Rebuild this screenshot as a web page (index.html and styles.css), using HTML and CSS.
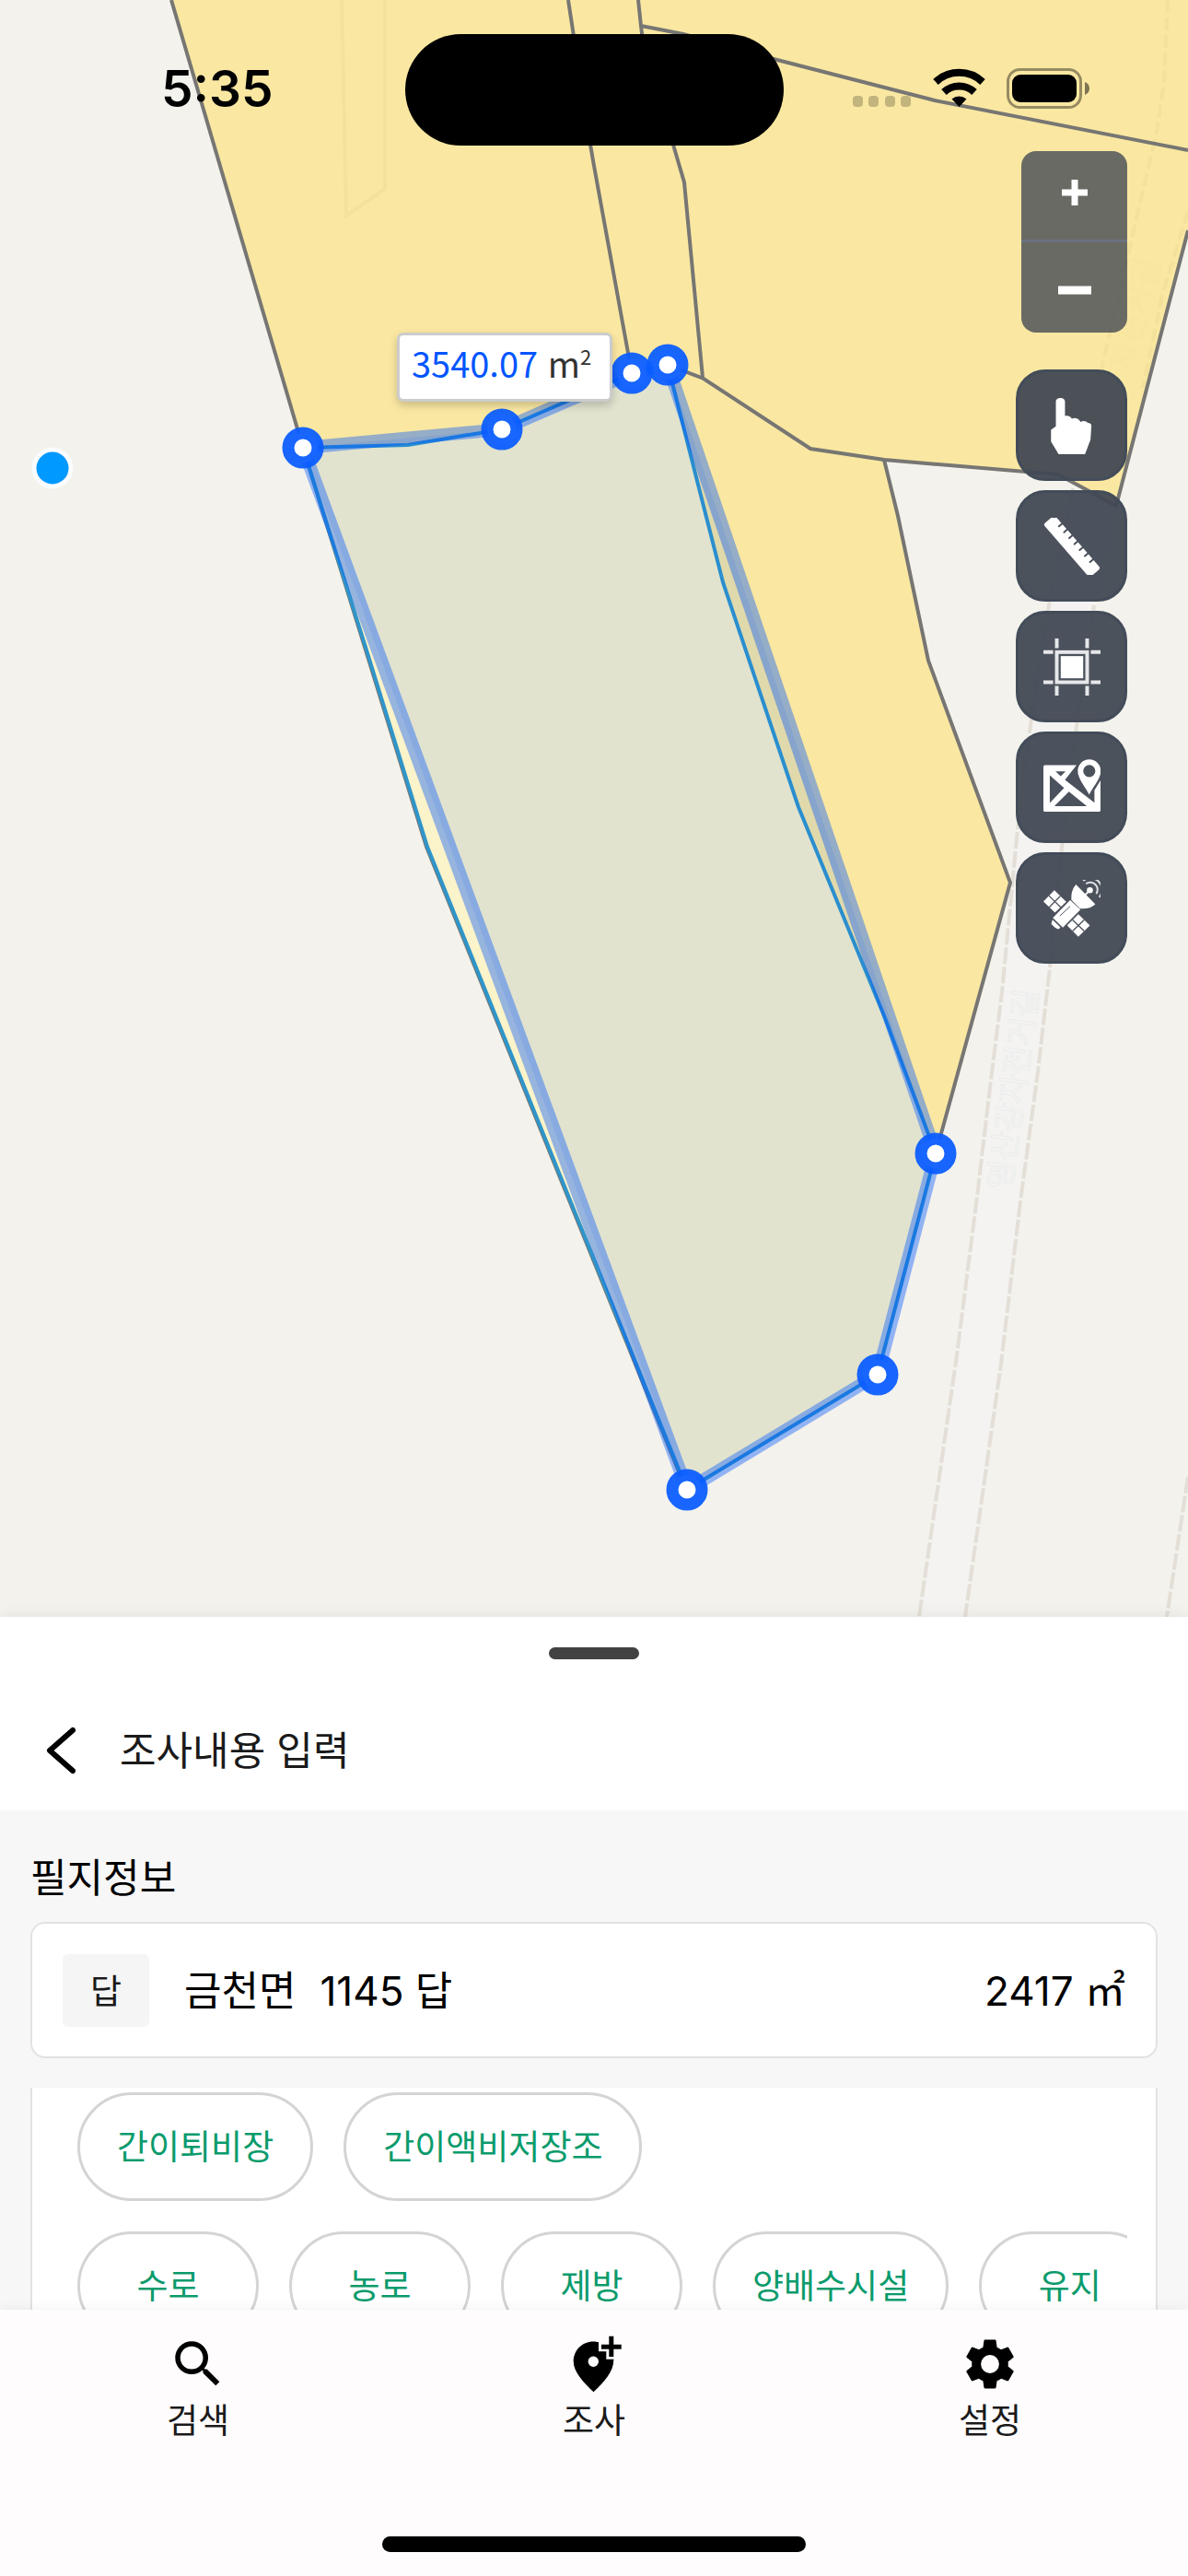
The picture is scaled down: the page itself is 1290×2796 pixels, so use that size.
FILE: index.html
```html
<!DOCTYPE html>
<html lang="ko">
<head>
<meta charset="utf-8">
<meta name="viewport" content="width=device-width, initial-scale=1">
<title>조사내용 입력</title>
<link rel="stylesheet" href="styles.css">
</head>
<body>
<div class="app">
  <main class="map">
    <svg class="map-canvas" viewBox="0 0 1290 1755" preserveAspectRatio="xMidYMin slice" aria-hidden="true">
      <rect width="1290" height="1755" fill="#f3f2ec"/>
      <!-- roads -->
      <path d="M1268 0L1256 143L1231 250L1215 321L1196 390L1165 530L1139 657L1119 787L1105 900L1088 1077L1076 1172L1061 1299L1039 1471L998 1755H1048L1087 1480L1108 1304L1127 1163L1140 1050L1153 920L1169 788L1188 657L1237 430L1262 321L1290 215V0Z" fill="#f4f3f1"/>
      <g class="road-edge">
        <path d="M1165 530L1139 657L1119 787L1105 900L1088 1077L1076 1172L1061 1299L1039 1471L998 1755"/>
        <path d="M1188 657L1169 788L1153 920L1140 1050L1127 1163L1108 1304L1087 1480L1048 1755"/>
        <path d="M1290 1603L1267 1755"/>
      </g>
      <text class="road-name" transform="translate(1097 1292) rotate(-82)">영산강자전거길</text>
      <!-- neighbouring parcels -->
      <path fill="#fae8a2" d="M186 0L329 486L443 483L545 466L686 405L725 396L785 632L867 876L961 1105L1016 1252L1097 958L1008 717L960 499L1114 512L1149 515L1212 549L1290 250V0Z"/>
      <g class="parcel-faint">
        <path d="M371 0L376 234L418 205V0"/>
        <path stroke-dasharray="14 5" d="M1268 0L1264 89L1256 143L1246 186L1231 250L1215 321L1196 400M1290 229L1262 321L1241 421"/>
      </g>
      <text class="road-name road-name-faint" transform="translate(1228 405) rotate(-75)">자전거길</text>
      <g class="parcel-line">
        <path d="M186 0L329 486"/>
        <path d="M617 0L641 157L645 180L686 405"/>
        <path d="M693 0L696 28L700 60L731 157L743 198L763 410"/>
        <path d="M696 28L742 37L840 64L1015 109L1290 163"/>
        <path d="M725 396L764 411L880 487L960 499L1114 512L1149 515L1212 549L1290 250"/>
        <path d="M960 499L975 560L1008 717L1097 958L1016 1252"/>
        <path d="M329 486L399 712L463 919L745 1617"/>
      </g>
      <!-- selected parcel and the surveyed outline over it -->
      <path fill="#fbf3c9" stroke="#2f95ca" stroke-width="4" d="M329 486L443 483L545 466L686 405L725 396L785 632L867 876L961 1105L1016 1252L953 1492L746 1617L464 919L400 712Z"/>
      <path class="survey" d="M329 486L545 466L686 405L725 396L1016 1252L953 1492L746 1617Z"/>
      <g class="vertex">
        <circle cx="329" cy="486" r="16"/><circle cx="545" cy="466" r="16"/><circle cx="686" cy="405" r="16"/><circle cx="725" cy="396" r="16"/><circle cx="1016" cy="1252" r="16"/><circle cx="953" cy="1492" r="16"/><circle cx="746" cy="1617" r="16"/>
      </g>
      <circle cx="57" cy="508" r="20" fill="#0099ff" stroke="#fafcfd" stroke-width="5"/>
    </svg>

    <header class="status">
      <time class="clock">5:35</time>
      <span class="island"></span>
      <svg class="status-icons" viewBox="0 0 260 44" aria-hidden="true">
        <g opacity=".22"><rect x="1" y="30" width="11" height="12" rx="4"/><rect x="18" y="30" width="11" height="12" rx="4"/><rect x="36" y="30" width="11" height="12" rx="4"/><rect x="53" y="30" width="11" height="12" rx="4"/></g>
        <g fill="none" stroke="#000" stroke-width="8"><path d="M91 15A37 37 0 0 1 142 15"/><path d="M100 26A24 24 0 0 1 133 26"/></g>
        <path d="M108.500 33.500A12 12 0 0 1 124.500 33.500L116.500 42Z"/>
        <rect x="169.500" y="1.500" width="79" height="41" rx="13" fill="none" stroke="#000" stroke-opacity=".4" stroke-width="3"/>
        <rect x="174" y="7" width="70" height="30" rx="9"/>
        <path d="M253 15q5 2 5 7t-5 7Z" opacity=".5"/>
      </svg>
    </header>

    <div class="controls">
      <div class="zoom">
        <button type="button" aria-label="확대"><svg viewBox="0 0 36 36"><path d="M18 4V32M4 18H32" stroke="#fff" stroke-width="7"/></svg></button>
        <button type="button" aria-label="축소"><svg viewBox="0 0 36 36"><path d="M0 18H36" stroke="#fff" stroke-width="9"/></svg></button>
      </div>
      <button class="tool" type="button" aria-label="선택"><svg viewBox="0 0 188 188"><path fill="#fff" d="M41 15C41-1 71-1 71 15V62C82 60 88 64 94 71C104 67 116 70 122 82C132 77 140 79 146 85C155 85 158 90 158 95L155 140L137 188H50L25 146V108L41 96Z"/></svg></button>
      <button class="tool" type="button" aria-label="거리 측정"><svg viewBox="0 0 188 188"><g transform="translate(94 94) rotate(49)"><path fill="#fff" d="M-108-24H-81V-10Q-78-5-75-10V-24H-55V-10Q-52-5-49-10V-24H-29V-10Q-26-5-23-10V-24H-3V-10Q0-5 3-10V-24H23V-10Q26-5 29-10V-24H49V-10Q52-5 55-10V-24H75V-10Q78-5 81-10V-24H108Q116-24 116-16V16Q116 24 108 24H-108Q-116 24-116 16V-16Q-116-24-108-24Z"/></g></svg></button>
      <button class="tool" type="button" aria-label="면적 측정"><svg viewBox="0 0 188 188"><rect x="44" y="45" width="100" height="99" fill="none" stroke="#e6e7ea" stroke-width="12"/><rect x="57" y="58" width="74" height="73" fill="#fff"/><path stroke="#e6e7ea" stroke-width="12" d="M0 45H32M156 45H188M0 144H32M156 144H188M44 0V32M144 0V32M44 156V188M144 156V188"/></svg></button>
      <button class="tool" type="button" aria-label="지도 유형"><svg viewBox="0 0 188 188"><g fill="#fff" fill-rule="evenodd"><path d="M5 20H109L71 68L168 143V102L188 70V168Q188 173 183 173H5Q0 173 0 168V25Q0 20 5 20ZM21 53V144L68 95ZM40 40H73L57 56ZM36 155H143L84 107Z"/><path d="M151 117C140 95 113 65 113 39A38 38 0 1 1 189 39C189 65 160 95 151 117ZM151 19A20 20 0 1 0 151 59A20 20 0 1 0 151 19Z"/></g></svg></button>
      <button class="tool" type="button" aria-label="위성 지도"><svg viewBox="0 0 188 188"><g fill="#fff"><path d="M36 34L75 72L38 108L0 71Z"/><path d="M115 113L153 150L115 187L78 150Z"/><path d="M88 67L122 98L64 157L31 125Z"/><path d="M30 131L56 156L50 162Q40 162 26 145Z"/><path d="M107 15L171 80Q150 98 120 94L92 66Q90 35 107 15Z"/><circle cx="153" cy="34" r="10"/></g><g stroke="#4a505b" stroke-width="4"><path d="M18 52L57 90M56 53L19 90M96 132L134 168M134 132L96 168"/><path d="M54 119L88 87" stroke-width="3"/></g><path d="M153 34L138 49" stroke="#fff" stroke-width="6"/><g fill="none" stroke="#dfe1e4" stroke-width="6"><path d="M140 13A24 24 0 0 1 174 46"/><path d="M131 3A38 38 0 0 1 184 57"/></g></svg></button>
    </div>

    <output class="area-label"><b>3540.07</b> m<sup>2</sup></output>
  </main>

  <section class="sheet">
    <div class="sheet-head">
      <span class="handle"></span>
      <div class="title-row">
        <button class="back" type="button" aria-label="뒤로"><svg viewBox="0 0 36 54"><path d="M31 5L6 27L31 49" fill="none" stroke="#000" stroke-width="6" stroke-linecap="round" stroke-linejoin="round"/></svg></button>
        <h1>조사내용 입력</h1>
      </div>
    </div>
    <div class="sheet-body">
      <h2>필지정보</h2>
      <div class="parcel">
        <span class="badge">답</span>
        <span class="address"><span>금천면</span><span>1145 답</span></span>
        <span class="size">2417 ㎡</span>
      </div>
      <div class="form">
        <div class="chips">
          <div class="chip-row">
            <button type="button">간이퇴비장</button>
            <button type="button">간이액비저장조</button>
          </div>
          <div class="chip-row">
            <button type="button">수로</button>
            <button type="button">농로</button>
            <button type="button">제방</button>
            <button type="button">양배수시설</button>
            <button type="button">유지</button>
          </div>
        </div>
      </div>
    </div>
  </section>

  <footer class="dock">
    <nav>
      <a href="#search"><svg viewBox="0 0 24 24"><path d="M15.500 14h-.79l-.28-.27A6.471 6.471 0 0 0 16 9.500 6.500 6.500 0 1 0 9.500 16c1.610 0 3.090-.59 4.230-1.570l.27.28v.79l5 4.990L20.490 19l-4.990-5zm-6 0C7.010 14 5 11.990 5 9.500S7.010 5 9.500 5 14 7.010 14 9.500 11.990 14 9.500 14z"/></svg>검색</a>
      <a href="#survey"><svg viewBox="0 0 66 66"><path fill-rule="evenodd" d="M38 9.200C36 8.600 34.500 8.400 32.500 8.400C20 8.400 10.700 18 10.700 30C10.700 42 22 53 32.500 63.300C43 53 54.400 42 54.400 27.700H46.300V19.300H38ZM32.300 24.600a5.700 5.700 0 1 0 0 11.400a5.700 5.700 0 1 0 0-11.400Z"/><path d="M49.300 2.700h5v9h8.400v5h-8.400v8.300h-5v-8.300H41v-5h8.300Z"/></svg>조사</a>
      <a href="#settings"><svg viewBox="0 0 24 24"><path d="M19.140 12.940c.04-.3.060-.61.060-.94 0-.32-.02-.64-.07-.94l2.030-1.580a.49.49 0 0 0 .12-.61l-1.920-3.320a.488.488 0 0 0-.59-.22l-2.390.96c-.5-.38-1.030-.7-1.620-.94l-.36-2.540a.484.484 0 0 0-.48-.41h-3.840c-.24 0-.43.17-.47.41l-.36 2.540c-.59.24-1.130.57-1.620.94l-2.390-.96c-.22-.08-.47 0-.59.22L2.740 8.870c-.12.21-.08.47.12.61l2.030 1.580c-.05.3-.09.63-.09.94s.02.64.07.94l-2.030 1.580a.49.49 0 0 0-.12.61l1.920 3.320c.12.22.37.29.59.22l2.390-.96c.5.38 1.030.7 1.620.94l.36 2.540c.05.24.24.41.48.41h3.840c.24 0 .44-.17.47-.41l.36-2.540c.59-.24 1.130-.56 1.620-.94l2.390.96c.22.08.47 0 .59-.22l1.920-3.320c.12-.22.07-.47-.12-.61l-2.010-1.580zM12 15.600A3.600 3.600 0 1 1 12 8.400a3.600 3.600 0 0 1 0 7.200z"/></svg>설정</a>
    </nav>
    <span class="home"></span>
  </footer>
</div>
</body>
</html>
```
FILE: styles.css
```css
* { box-sizing: border-box; }

body {
  margin: 0;
  font-family: Inter, "Noto Sans CJK KR", sans-serif;
  font-size: 44px;
  color: #000;
}

button {
  margin: 0;
  padding: 0;
  border: 0;
  background: none;
  font: inherit;
  color: inherit;
}

svg { display: block; }

.app {
  display: flex;
  flex-direction: column;
  min-height: 100vh;
}

/* Map */
.map {
  position: relative;
  flex: 1;
  overflow: hidden;
  background: #f3f2ec;
}

.map-canvas {
  position: absolute;
  inset: 0;
  width: 100%;
  height: 100%;
}

.road-edge path {
  fill: none;
  stroke: #e3dfd7;
  stroke-width: 4;
  stroke-dasharray: 18 3;
}

.road-name {
  font-family: "Noto Sans CJK KR", sans-serif;
  font-size: 34px;
  fill: #f5f5f4;
  stroke: #ebecec;
  stroke-width: 1;
}

.road-name-faint {
  fill: none;
  stroke: #f7e6a0;
}

.parcel-faint path {
  fill: none;
  stroke: #f3e19c;
  stroke-width: 4;
}

.parcel-line path {
  fill: none;
  stroke: #777673;
  stroke-width: 4;
}

.survey {
  fill: rgba(0, 85, 255, .1);
  stroke: rgba(0, 85, 255, .4);
  stroke-width: 14;
}

.vertex circle {
  fill: #fff;
  stroke: #0a5cff;
  stroke-opacity: .94;
  stroke-width: 13;
}

.status {
  position: relative;
  display: grid;
  grid-template-columns: 1fr 411px 1fr;
  align-items: center;
  height: 121px;
  margin-top: 37px;
}

.clock {
  justify-self: center;
  padding: 0 0 4px 32px;
  font-size: 55px;
  font-weight: 600;
}

.island {
  height: 121px;
  border-radius: 61px;
  background: #000;
}

.status-icons {
  justify-self: center;
  width: 260px;
  margin: 0 30px 4px 0;
}

.controls {
  position: relative;
  display: flex;
  flex-direction: column;
  align-items: flex-end;
  gap: 10px;
  padding: 6px 66px 0 0;
}

.zoom {
  width: 115px;
  margin-bottom: 30px;
  overflow: hidden;
  border-radius: 16px;
  background: rgba(57, 64, 79, .75);
}

.zoom button {
  display: grid;
  place-items: center;
  width: 100%;
  height: 96px;
  padding-bottom: 6px;
}

.zoom button + button {
  height: 101px;
  padding: 6px 0 0;
  border-top: 3px solid #6b7280;
}

.zoom svg { width: 36px; }

.tool {
  display: grid;
  place-items: center;
  width: 121px;
  height: 121px;
  border: 3px solid #434c59;
  border-radius: 32px;
  background: rgba(66, 73, 84, .95);
}

.tool svg { width: 62px; }

.area-label {
  position: absolute;
  left: 431px;
  top: 361px;
  height: 75px;
  padding: 0 20px 0 13px;
  border: 3px solid #ccc;
  border-radius: 7px;
  background: #fff;
  box-shadow: 0 4px 10px rgba(0, 0, 0, .2);
  color: #333;
  font-family: "Noto Sans CJK KR", sans-serif;
  font-size: 38px;
  line-height: 60px;
  white-space: nowrap;
}

.area-label b {
  color: #05f;
  font-weight: 400;
}

.area-label sup {
  font-size: 22px;
  line-height: 0;
}

/* Bottom sheet */
.sheet {
  position: relative;
  background: #fff;
  box-shadow: 0 0 16px rgba(0, 0, 0, .08);
}

.sheet-head {
  display: flex;
  flex-direction: column;
  height: 210px;
  padding-top: 33px;
}

.handle {
  align-self: center;
  width: 98px;
  height: 13px;
  border-radius: 7px;
  background: #424242;
}

.title-row {
  display: flex;
  align-items: center;
  gap: 46px;
  padding: 69px 48px 0;
}

.back svg { width: 36px; }

h1, h2 {
  margin: 0;
  font-size: 43px;
  font-weight: 400;
  line-height: 60px;
}

h1 { color: #1a1a1a; }

.sheet-body {
  padding: 43px 33px 0;
  background: #f7f7f7;
}

.parcel {
  display: flex;
  align-items: center;
  height: 148px;
  margin-top: 18px;
  padding: 0 33px 4px;
  border: 2px solid #e2e2e2;
  border-radius: 16px;
  background: #fff;
}

.badge {
  display: grid;
  place-items: center;
  width: 94px;
  height: 79px;
  margin-top: 4px;
  padding-bottom: 2px;
  border-radius: 6px;
  background: #f5f5f5;
  color: #1a1a1a;
  font-size: 37px;
}

.address {
  display: flex;
  flex: 1;
  gap: 26px;
  padding-left: 38px;
}

.form {
  height: 241px;
  margin-top: 32px;
  padding: 5px 31px 0 49px;
  overflow: hidden;
  border: solid #e2e2e2;
  border-width: 0 2px;
  background: #fff;
}

.chips {
  display: grid;
  gap: 33px;
  overflow: hidden;
}

.chip-row {
  display: flex;
  gap: 33px;
}

.chip-row button {
  flex: none;
  min-width: 197px;
  height: 118px;
  padding: 0 40px 4px;
  border: 3px solid #d4d4d4;
  border-radius: 60px;
  color: #0a9b6c;
  font-size: 37px;
}

/* Bottom navigation */
.dock {
  position: relative;
  display: flex;
  flex-direction: column;
  align-items: center;
  justify-content: space-between;
  height: 289px;
  padding: 26px 0;
  background: #fffcfd;
  box-shadow: 0 0 14px rgba(0, 0, 0, .06);
}

nav {
  display: grid;
  grid-template-columns: repeat(3, 1fr);
  width: 100%;
}

nav a {
  display: flex;
  flex-direction: column;
  align-items: center;
  color: #1a1a1a;
  font-size: 37px;
  line-height: 58px;
  text-decoration: none;
}

nav svg {
  width: 66px;
  fill: #000;
}

.home {
  width: 460px;
  height: 17px;
  border-radius: 9px;
  background: #000;
}
```
